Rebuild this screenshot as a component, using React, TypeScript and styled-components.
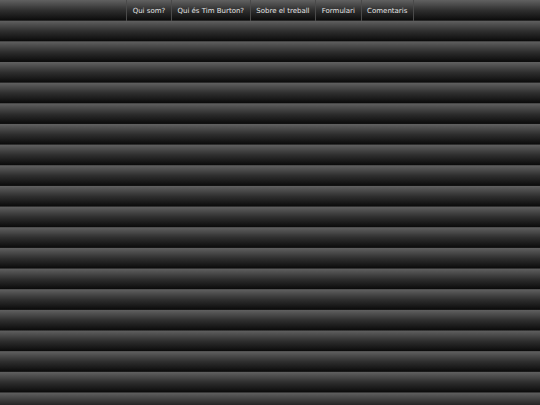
import React from "react";
import styled, { createGlobalStyle } from "styled-components";

const STRIPE = 20.67;

const GlobalStyle = createGlobalStyle`
  html, body {
    margin: 0;
    padding: 0;
    min-height: 100%;
  }
  body {
    font-family: "DejaVu Sans", Verdana, sans-serif;
    background-color: #0e0e0e;
    background-image: linear-gradient(to bottom, #616161 0%, #2f2f2f 50%, #0a0a0a 100%);
    background-size: 100% ${STRIPE}px;
    background-repeat: repeat;
    min-height: 405px;
  }
`;

const Page = styled.div`
  width: 100%;
  min-height: 405px;
`;

const Nav = styled.nav`
  display: flex;
  justify-content: center;
  height: ${STRIPE}px;
`;

const Menu = styled.ul`
  display: flex;
  margin: 0;
  padding: 0;
  list-style: none;
  border-left: 1px solid #4a4a4a;
`;

const Item = styled.li`
  display: flex;
  border-right: 1px solid #4a4a4a;
`;

const Link = styled.a`
  display: flex;
  align-items: center;
  padding: 1px 5.6px 0;
  height: ${STRIPE}px;
  font-size: 7px;
  color: #e2e2e2;
  text-decoration: none;
  white-space: nowrap;
  box-sizing: border-box;
`;

const links = ["Qui som?", "Qui és Tim Burton?", "Sobre el treball", "Formulari", "Comentaris"];

export default function App() {
  return (
    <Page>
      <GlobalStyle />
      <Nav>
        <Menu>
          {links.map((l) => (
            <Item key={l}>
              <Link href="#">{l}</Link>
            </Item>
          ))}
        </Menu>
      </Nav>
    </Page>
  );
}
